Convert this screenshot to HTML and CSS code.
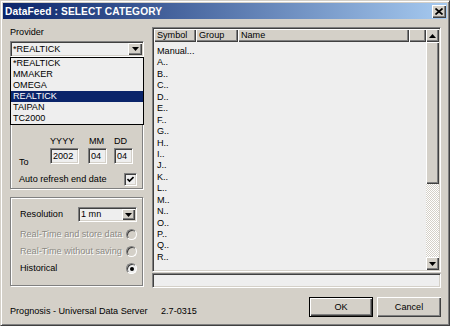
FILE: index.html
```html
<!DOCTYPE html>
<html>
    <head>
        <title>DataFeed : SELECT CATEGORY</title>
        <link rel="stylesheet" href="styles.css">
    </head>
    <body>
        <div class="window">
            <div class="titlebar">
                <span class="title">DataFeed : SELECT CATEGORY</span>
                <span class="close raised">
                    <svg width="8" height="7" viewBox="0 0 8 7"><path d="M0.5 0.5 L7.5 6.5 M7.5 0.5 L0.5 6.5" stroke="#000" stroke-width="1.7"/></svg>
                </span>
            </div>

            <div class="content">
                <div class="main">
                    <div class="left">
                        <div class="label">Provider</div>
                        <div class="combo provider">
                            <span class="combo-text">*REALTICK</span>
                            <span class="arrow raised">
                                <svg width="7" height="4" viewBox="0 0 7 4"><polygon points="0,0 7,0 3.5,4" fill="#000"/></svg>
                            </span>
                            <ul class="popup">
                                <li>*REALTICK</li>
                                <li>MMAKER</li>
                                <li>OMEGA</li>
                                <li class="selected">REALTICK</li>
                                <li>TAIPAN</li>
                                <li>TC2000</li>
                            </ul>
                        </div>

                        <div class="group range">
                            <div class="dates">
                                <span class="to">To</span>
                                <div class="field year">
                                    <span>YYYY</span>
                                    <span class="edit">2002</span>
                                </div>
                                <div class="field month">
                                    <span>MM</span>
                                    <span class="edit">04</span>
                                </div>
                                <div class="field day">
                                    <span>DD</span>
                                    <span class="edit">04</span>
                                </div>
                            </div>
                            <div class="option-row check-row">
                                <span>Auto refresh end date</span>
                                <span class="checkbox">
                                    <svg width="7" height="7" viewBox="0 0 7 7"><path d="M0.5 3 L2.5 5 L6.5 1" stroke="#000" stroke-width="1.6" fill="none"/></svg>
                                </span>
                            </div>
                        </div>

                        <div class="group mode">
                            <div class="res-row">
                                <span>Resolution</span>
                                <div class="combo small">
                                    <span class="combo-text">1 mn</span>
                                    <span class="arrow raised">
                                        <svg width="7" height="4" viewBox="0 0 7 4"><polygon points="0,0 7,0 3.5,4" fill="#000"/></svg>
                                    </span>
                                </div>
                            </div>
                            <div class="option-row disabled">
                                <span>Real-Time and store data</span>
                                <span class="radio"></span>
                            </div>
                            <div class="option-row disabled">
                                <span>Real-Time without saving</span>
                                <span class="radio"></span>
                            </div>
                            <div class="option-row">
                                <span>Historical</span>
                                <span class="radio checked"></span>
                            </div>
                        </div>
                    </div>

                    <div class="right">
                        <div class="listview">
                            <div class="lv-body">
                                <div class="header">
                                    <span class="col symbol">Symbol</span>
                                    <span class="col group-col">Group</span>
                                    <span class="col name">Name</span>
                                    <span class="col filler"></span>
                                </div>
                                <ul class="rows">
                                    <li>Manual...</li>
                                    <li>A..</li>
                                    <li>B..</li>
                                    <li>C..</li>
                                    <li>D..</li>
                                    <li>E..</li>
                                    <li>F..</li>
                                    <li>G..</li>
                                    <li>H..</li>
                                    <li>I..</li>
                                    <li>J..</li>
                                    <li>K..</li>
                                    <li>L..</li>
                                    <li>M..</li>
                                    <li>N..</li>
                                    <li>O..</li>
                                    <li>P..</li>
                                    <li>Q..</li>
                                    <li>R..</li>
                                </ul>
                            </div>
                            <div class="scrollbar">
                                <span class="sb-btn raised">
                                    <svg width="7" height="4" viewBox="0 0 7 4"><polygon points="0,4 7,4 3.5,0" fill="#000"/></svg>
                                </span>
                                <span class="thumb raised"></span>
                                <span class="track"></span>
                                <span class="sb-btn raised">
                                    <svg width="7" height="4" viewBox="0 0 7 4"><polygon points="0,0 7,0 3.5,4" fill="#000"/></svg>
                                </span>
                            </div>
                        </div>
                        <div class="status"></div>
                    </div>
                </div>

                <div class="footer">
                    <span class="app">Prognosis - Universal Data Server</span>
                    <span class="version">2.7-0315</span>
                    <div class="buttons">
                        <button class="btn default">OK</button>
                        <button class="btn">Cancel</button>
                    </div>
                </div>
            </div>
        </div>
    </body>
</html>
```

FILE: styles.css
```css
body{
    margin: 0;
    font-family: "Liberation Sans", Arial, sans-serif;
    font-size: 9.1px;
    line-height: 11px;
    color: #000;
}
ul{
    list-style: none;
    margin: 0;
    padding: 0;
}

/* 3d helpers */
.raised{
    background: #d4d0c8;
    box-shadow: inset 1px 1px #fff, inset -1px -1px #404040, inset -2px -2px #808080;
}

.window{
    width: 450px;
    height: 326px;
    box-sizing: border-box;
    background: #d4d0c8;
    border: 1px solid;
    border-color: #d4d0c8 #404040 #404040 #d4d0c8;
    box-shadow: inset 1px 1px #fff, inset -1px -1px #808080;
    padding: 2px;
    display: flex;
    flex-direction: column;
}

.titlebar{
    height: 16px;
    padding-left: 2px;
    display: flex;
    align-items: center;
    justify-content: space-between;
    background: linear-gradient(to right, #0a246a, #a6caf0);
}
.title{
    color: #fff;
    font-weight: bold;
    font-size: 10.2px;
    letter-spacing: 0.1px;
}
.close{
    width: 14px;
    height: 13px;
    margin-right: 1px;
    display: flex;
    align-items: center;
    justify-content: center;
}

.content{
    padding: 8px 6px 0 7px;
    display: flex;
    flex-direction: column;
}
.main{
    display: flex;
    gap: 8px;
}
.left{
    width: 134px;
    display: flex;
    flex-direction: column;
}
.right{
    flex: 1;
    display: flex;
    flex-direction: column;
    gap: 1px;
}

/* combo boxes */
.combo{
    position: relative;
    box-sizing: border-box;
    height: 16px;
    padding: 1px;
    display: flex;
    align-items: center;
    background: #eee;
    border: 1px solid;
    border-color: #808080 #fff #fff #808080;
    box-shadow: inset 1px 1px #404040, inset -1px -1px #d4d0c8;
}
.combo-text{
    flex: 1;
    padding-left: 1px;
}
.arrow{
    width: 14px;
    height: 12px;
    display: flex;
    align-items: center;
    justify-content: center;
}
.provider{
    margin-top: 3px;
}
.popup{
    position: absolute;
    top: calc(100% + 1px);
    left: -1px;
    right: -1px;
    z-index: 2;
    background: #eee;
    border: 1px solid #000;
}
.popup li{
    height: 11px;
    padding-left: 2px;
}
.popup .selected{
    background: #0a246a;
    color: #fff;
}

/* group boxes */
.group{
    margin-right: 1px;
    border: 1px solid #808080;
    box-shadow: inset 1px 1px #fff, 1px 1px #fff;
}
.range{
    margin-top: 6px;
    padding: 72px 5px 2px 8px;
}
.dates{
    display: flex;
    align-items: flex-end;
}
.to{
    width: 31px;
    margin-bottom: -4px;
}
.field{
    display: flex;
    flex-direction: column;
    gap: 1px;
}
.year{
    width: 29px;
    margin-right: 9px;
}
.month{
    width: 19px;
    margin-right: 7px;
}
.day{
    width: 19px;
}
.month span:first-child{
    padding-left: 1px;
}
.edit{
    box-sizing: border-box;
    height: 16px;
    padding: 2px 0 0 2px;
    background: #eee;
    border: 1px solid;
    border-color: #808080 #fff #fff #808080;
    box-shadow: inset 1px 1px #404040, inset -1px -1px #d4d0c8;
}

.option-row{
    display: flex;
    align-items: center;
    justify-content: space-between;
    height: 17px;
}
.check-row{
    height: 13px;
    margin-top: 9px;
}
.checkbox{
    box-sizing: border-box;
    width: 13px;
    height: 13px;
    display: flex;
    align-items: center;
    justify-content: center;
    background: #eee;
    border: 1px solid;
    border-color: #808080 #fff #fff #808080;
    box-shadow: inset 1px 1px #404040, inset -1px -1px #d4d0c8;
}

.mode{
    margin-top: 8px;
    padding: 9px 5px 8px 9px;
}
.res-row{
    display: flex;
    align-items: center;
    justify-content: space-between;
    margin-bottom: 4px;
}
.small{
    width: 59px;
    height: 15px;
}
.small .arrow{
    width: 13px;
    height: 11px;
}
.radio{
    box-sizing: border-box;
    width: 11px;
    height: 11px;
    border-radius: 50%;
    background: #eee;
    border: 1px solid;
    border-color: #808080 #fff #fff #808080;
    box-shadow: inset 1px 1px #404040;
    display: flex;
    align-items: center;
    justify-content: center;
}
.disabled{
    color: #8c8a84;
    text-shadow: 1px 1px 0 #fff;
}
.disabled .radio{
    background: #d4d0c8;
}
.checked::after{
    content: "";
    width: 4px;
    height: 4px;
    border-radius: 50%;
    background: #000;
}

/* list view */
.listview{
    box-sizing: border-box;
    height: 245px;
    display: flex;
    background: #eee;
    border: 1px solid;
    border-color: #808080 #fff #fff #808080;
    box-shadow: inset 1px 1px #404040, inset -1px -1px #d4d0c8;
    padding: 1px;
}
.lv-body{
    flex: 1;
    display: flex;
    flex-direction: column;
}
.header{
    display: flex;
    height: 13px;
}
.col{
    box-sizing: border-box;
    padding-left: 3px;
    background: #d4d0c8;
    box-shadow: inset 1px 1px #fff, inset -1px -1px #404040, inset -2px -2px #808080;
    line-height: 13px;
}
.symbol, .group-col{
    width: 42px;
}
.name{
    width: 171px;
}
.filler{
    flex: 1;
}
.rows{
    padding: 4px 0 0 3px;
}
.rows li{
    height: 11.45px;
    line-height: 11.45px;
}

.scrollbar{
    width: 13px;
    display: flex;
    flex-direction: column;
}
.sb-btn{
    height: 13px;
    display: flex;
    align-items: center;
    justify-content: center;
}
.thumb{
    height: 142px;
}
.track{
    flex: 1;
    background: repeating-conic-gradient(#fff 0 25%, #d4d0c8 0 50%) 0 0 / 2px 2px;
}

.status{
    box-sizing: border-box;
    height: 15px;
    background: #eee;
    border: 1px solid;
    border-color: #808080 #fff #fff #808080;
    box-shadow: inset 1px 1px #404040, inset -1px -1px #d4d0c8;
}

/* footer */
.footer{
    display: flex;
    align-items: flex-end;
    padding-top: 9px;
}
.app{
    width: 151px;
}
.buttons{
    margin-left: auto;
    display: flex;
    gap: 4px;
}
.btn{
    width: 64px;
    height: 20px;
    padding: 0;
    border: none;
    font-family: "Liberation Sans", Arial, sans-serif;
    font-size: 9.1px;
    color: #000;
    background: #d4d0c8;
    box-shadow: inset 1px 1px #fff, inset -1px -1px #404040, inset -2px -2px #808080;
}
.default{
    border: 1px solid #000;
}
```
